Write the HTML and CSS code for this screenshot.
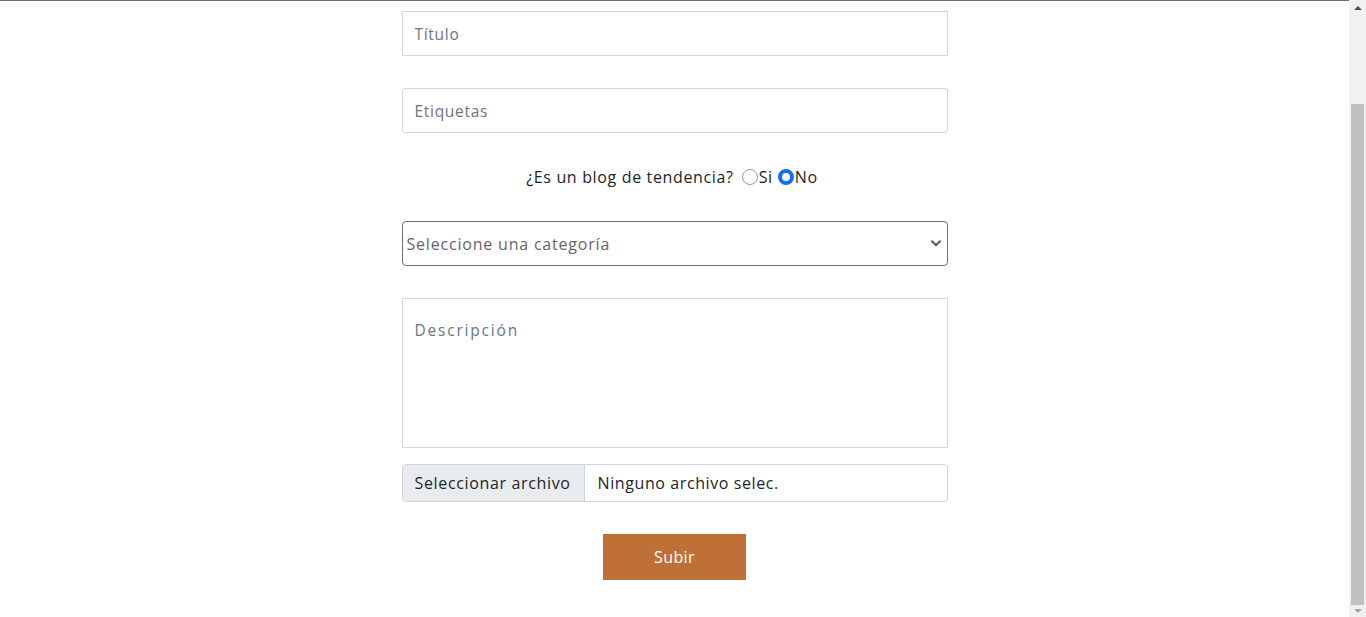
FILE: index.html
```html
<!DOCTYPE html>
<html lang="es">
<head>
<meta charset="utf-8">
<title>Subir blog</title>
<link rel="stylesheet" href="styles.css">
</head>
<body>
<main class="page">
  <form class="blog-form">
    <input class="field" type="text" placeholder="Título">
    <input class="field field-round" type="text" placeholder="Etiquetas">
    <div class="trend-row">
      <span class="trend-label">¿Es un blog de tendencia?</span>
      <label class="radio-opt"><span class="radio"></span>Si</label>
      <label class="radio-opt"><span class="radio radio-checked"></span>No</label>
    </div>
    <div class="select">
      <span class="select-text">Seleccione una categoría</span>
      <svg class="chevron" width="10" height="7" viewBox="0 0 10 7"><path d="M1 1.2 L5 5.2 L9 1.2" fill="none" stroke="#5f5563" stroke-width="2" stroke-linecap="round" stroke-linejoin="round"/></svg>
    </div>
    <textarea class="area" placeholder="Descripción"></textarea>
    <div class="file">
      <span class="file-btn">Seleccionar archivo</span>
      <span class="file-name">Ninguno archivo selec.</span>
    </div>
    <div class="submit-row">
      <button class="submit" type="button">Subir</button>
    </div>
  </form>
</main>
<aside class="scrollbar">
  <span class="sb-up"></span>
  <div class="sb-track"><div class="sb-thumb"></div></div>
  <span class="sb-down"></span>
</aside>
</body>
</html>
```
FILE: styles.css
```css
html, body {
  margin: 0;
  height: 617px;
  overflow: hidden;
}
body {
  display: flex;
  background: #fff;
  font-family: "Open Sans", "DejaVu Sans", sans-serif;
  color: #212529;
}
.page {
  flex: 1;
  border-top: 1px solid #5f707a;
  display: flex;
  justify-content: center;
}
.blog-form {
  width: 546px;
  padding-top: 10px;
  display: flex;
  flex-direction: column;
}
.field {
  box-sizing: border-box;
  height: 45px;
  width: 100%;
  margin: 0 0 32px;
  padding: 0 12px;
  border: 1px solid #d4d6d9;
  border-radius: 0;
  font: 15.5px "Open Sans", sans-serif;
  letter-spacing: 0.7px;
  color: #212529;
  outline: none;
}
.field-round { border-radius: 3px; }
.field::placeholder, .area::placeholder { color: #6c757d; }
.trend-row {
  height: 24px;
  display: flex;
  justify-content: center;
  align-items: center;
  font-size: 16px;
  letter-spacing: 0.65px;
  margin-bottom: 32px;
}
.trend-label { margin-right: 8px; }
.radio-opt {
  display: flex;
  align-items: center;
  margin-right: 5px;
}
.radio {
  box-sizing: border-box;
  width: 16px;
  height: 16px;
  border-radius: 50%;
  border: 1px solid #9a9a9a;
  margin-right: 1px;
  background: #fff;
}
.radio-checked {
  border: 4px solid #0d6efd;
}
.select {
  box-sizing: border-box;
  height: 45px;
  border: 1px solid #6e6e6e;
  border-radius: 4px;
  display: flex;
  align-items: center;
  justify-content: space-between;
  padding: 0 6px 0 4px;
  margin-bottom: 32px;
}
.select-text {
  color: #6b5f70;
  font-size: 16px;
  letter-spacing: 0.8px;
}
.chevron { display: block; }
.area {
  box-sizing: border-box;
  height: 150px;
  width: 100%;
  resize: none;
  border: 1px solid #d4d6d9;
  padding: 20px 12px;
  margin: 0 0 16px;
  font: 15.5px "Open Sans", sans-serif;
  letter-spacing: 1.8px;
  outline: none;
}
.file {
  box-sizing: border-box;
  height: 38px;
  border: 1px solid #ced4da;
  border-radius: 4px;
  display: flex;
  overflow: hidden;
  font-size: 16px;
  letter-spacing: 0.65px;
  margin-bottom: 32px;
}
.file-btn {
  width: 182px;
  box-sizing: border-box;
  background: #e9ecef;
  border-right: 1px solid #ced4da;
  display: flex;
  align-items: center;
  padding-left: 12px;
}
.file-name {
  display: flex;
  align-items: center;
  padding-left: 13px;
  letter-spacing: 0.6px;
}
.submit-row {
  display: flex;
  justify-content: center;
}
.submit {
  width: 143px;
  height: 46px;
  border: 0;
  border-radius: 0;
  background: #bf7036;
  color: #fff;
  font: 500 16px "Open Sans", sans-serif;
  letter-spacing: 0.4px;
}
.scrollbar {
  width: 17px;
  height: 617px;
  background: #f1f1f1;
  display: flex;
  flex-direction: column;
  align-items: center;
}
.sb-up {
  margin-top: 6px;
  width: 0;
  height: 0;
  border-left: 4px solid transparent;
  border-right: 4px solid transparent;
  border-bottom: 4px solid #505050;
}
.sb-track {
  flex: 1;
  width: 100%;
  display: flex;
  justify-content: center;
  padding-top: 94px;
  box-sizing: border-box;
}
.sb-thumb {
  width: 13px;
  height: 501px;
  background: #c1c1c1;
}
.sb-down {
  margin-bottom: 4px;
  width: 0;
  height: 0;
  border-left: 4px solid transparent;
  border-right: 4px solid transparent;
  border-top: 4px solid #a3a3a3;
}
```
